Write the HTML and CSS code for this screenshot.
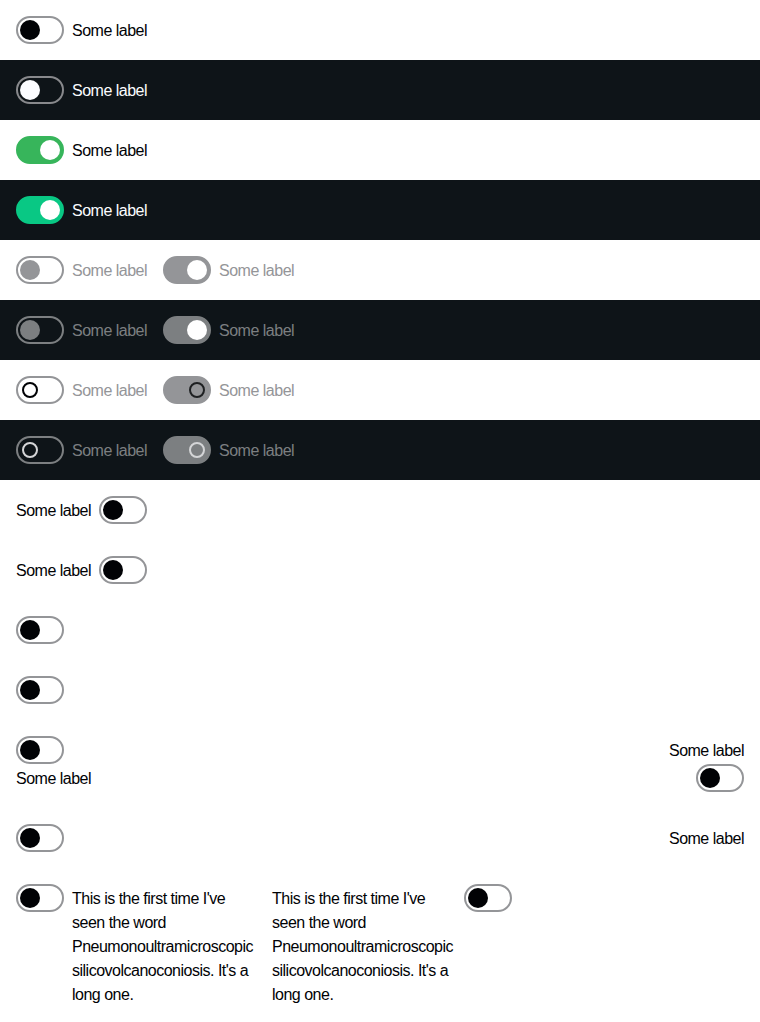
FILE: index.html
```html
<!DOCTYPE html>
<html lang="en">
<head>
<meta charset="utf-8">
<title>Switches</title>
<link rel="stylesheet" href="styles.css">
</head>
<body>
<div class="row">
  <label class="sw"><span class="track"><span class="knob"></span></span><span class="label">Some label</span></label>
</div>
<div class="row dark">
  <label class="sw"><span class="track"><span class="knob"></span></span><span class="label">Some label</span></label>
</div>
<div class="row">
  <label class="sw on"><span class="track"><span class="knob"></span></span><span class="label">Some label</span></label>
</div>
<div class="row dark">
  <label class="sw on"><span class="track"><span class="knob"></span></span><span class="label">Some label</span></label>
</div>
<div class="row">
  <label class="sw disabled"><span class="track"><span class="knob"></span></span><span class="label">Some label</span></label>
  <label class="sw on disabled"><span class="track"><span class="knob"></span></span><span class="label">Some label</span></label>
</div>
<div class="row dark">
  <label class="sw disabled"><span class="track"><span class="knob"></span></span><span class="label">Some label</span></label>
  <label class="sw on disabled"><span class="track"><span class="knob"></span></span><span class="label">Some label</span></label>
</div>
<div class="row">
  <label class="sw loading"><span class="track"><span class="knob"><span class="ring"></span></span></span><span class="label">Some label</span></label>
  <label class="sw on loading"><span class="track"><span class="knob"><span class="ring"></span></span></span><span class="label">Some label</span></label>
</div>
<div class="row dark">
  <label class="sw loading"><span class="track"><span class="knob"><span class="ring"></span></span></span><span class="label">Some label</span></label>
  <label class="sw on loading"><span class="track"><span class="knob"><span class="ring"></span></span></span><span class="label">Some label</span></label>
</div>
<div class="row">
  <label class="sw"><span class="label">Some label</span><span class="track"><span class="knob"></span></span></label>
</div>
<div class="row">
  <label class="sw"><span class="label">Some label</span><span class="track"><span class="knob"></span></span></label>
</div>
<div class="row">
  <label class="sw"><span class="track"><span class="knob"></span></span></label>
</div>
<div class="row">
  <label class="sw"><span class="track"><span class="knob"></span></span></label>
</div>
<div class="row split">
  <label class="sw stack"><span class="track"><span class="knob"></span></span><span class="label">Some label</span></label>
  <label class="sw stack end"><span class="label">Some label</span><span class="track"><span class="knob"></span></span></label>
</div>
<div class="row split">
  <label class="sw"><span class="track"><span class="knob"></span></span></label>
  <label class="sw"><span class="label">Some label</span></label>
</div>
<div class="row">
  <label class="sw fixed"><span class="track"><span class="knob"></span></span><span class="label">This is the first time I've seen the word Pneumonoultramicroscopicsilicovolcanoconiosis. It's a long one.</span></label>
  <label class="sw fixed"><span class="label">This is the first time I've seen the word Pneumonoultramicroscopicsilicovolcanoconiosis. It's a long one.</span><span class="track"><span class="knob"></span></span></label>
</div>
</body>
</html>
```
FILE: styles.css
```css
html, body {
  margin: 0;
  padding: 0;
  background: #ffffff;
}
body {
  font-family: "Liberation Sans", Arial, sans-serif;
  font-size: 16px;
  line-height: 24px;
  letter-spacing: -0.5px;
  color: #010205;
}
.row {
  display: flex;
  gap: 16px;
  padding: 16px;
  background: #ffffff;
}
.row.dark {
  background: #0e1418;
  color: #fbfcff;
}
.row.split {
  justify-content: space-between;
}
.sw {
  display: flex;
  align-items: flex-start;
  gap: 8px;
}
.sw.stack {
  flex-direction: column;
  gap: 0;
}
.sw.stack.end {
  align-items: flex-end;
}
.sw.fixed {
  width: 240px;
}
.sw.fixed .label {
  flex: 1;
  min-width: 0;
  overflow-wrap: anywhere;
}
.label {
  padding: 3px 0 1px;
  white-space: normal;
}
.track {
  box-sizing: border-box;
  flex-shrink: 0;
  display: flex;
  align-items: center;
  width: 48px;
  height: 28px;
  padding: 0 2px;
  border: 2px solid #949598;
  border-radius: 14px;
}
.knob {
  width: 20px;
  height: 20px;
  border-radius: 50%;
  background: #010205;
  display: flex;
  align-items: center;
  justify-content: center;
}
.dark .track {
  border-color: #88898c;
}
.dark .knob {
  background: #fbfcff;
}
.on .track {
  justify-content: flex-end;
  background: #37b55b;
  border-color: #37b55b;
}
.on .knob {
  background: #ffffff;
}
.dark .on .track {
  background: #09c884;
  border-color: #09c884;
}
.disabled .label,
.loading .label {
  color: #949598;
}
.disabled .track {
  border-color: #949598;
}
.disabled .knob {
  background: #949598;
}
.on.disabled .track {
  background: #949598;
}
.on.disabled .knob {
  background: #ffffff;
}
.dark .disabled .label,
.dark .loading .label {
  color: #7c7f81;
}
.dark .disabled .track {
  border-color: #7c7f81;
}
.dark .disabled .knob {
  background: #7c7f81;
}
.dark .on.disabled .track {
  background: #7c7f81;
}
.dark .on.disabled .knob {
  background: #ffffff;
}
.loading .track {
  border-color: #949598;
}
.loading .knob,
.dark .loading .knob {
  background: transparent;
}
.on.loading .track {
  background: #949598;
  border-color: #949598;
}
.dark .loading .track {
  border-color: #7c7f81;
}
.dark .on.loading .track {
  background: #7c7f81;
  border-color: #7c7f81;
}
.ring {
  box-sizing: border-box;
  width: 16px;
  height: 16px;
  border-radius: 50%;
  border: 2px solid #010205;
}
.on .ring {
  border-color: #1e2022;
}
.dark .ring {
  border-color: #d4d5d7;
}
```
